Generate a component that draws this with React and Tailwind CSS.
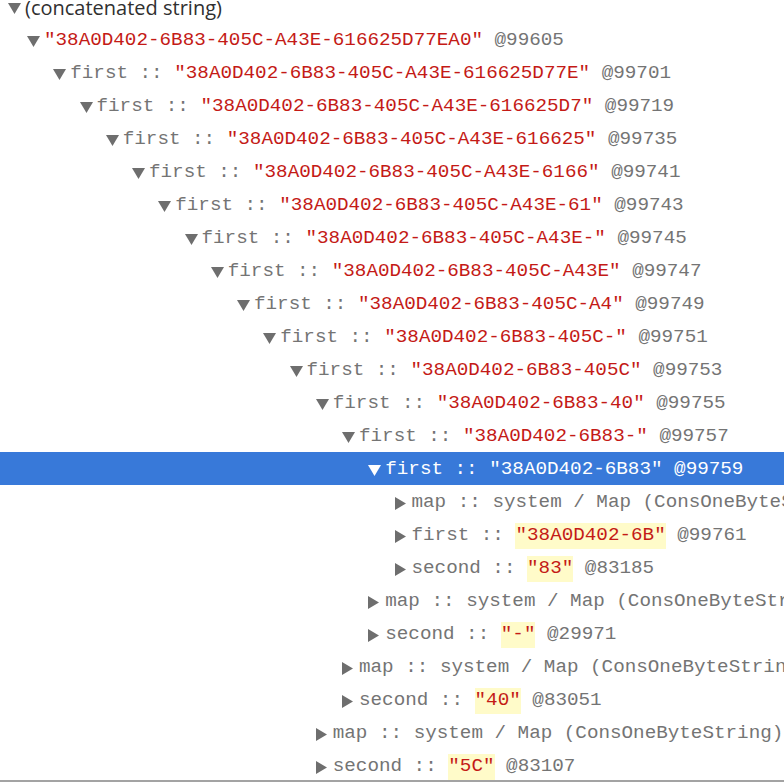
import React from "react";

const rows = [
  { level: 1, open: true, str: "38A0D402-6B83-405C-A43E-616625D77EA0", id: "@99605" },
  { level: 2, open: true, key: "first", str: "38A0D402-6B83-405C-A43E-616625D77E", id: "@99701" },
  { level: 3, open: true, key: "first", str: "38A0D402-6B83-405C-A43E-616625D7", id: "@99719" },
  { level: 4, open: true, key: "first", str: "38A0D402-6B83-405C-A43E-616625", id: "@99735" },
  { level: 5, open: true, key: "first", str: "38A0D402-6B83-405C-A43E-6166", id: "@99741" },
  { level: 6, open: true, key: "first", str: "38A0D402-6B83-405C-A43E-61", id: "@99743" },
  { level: 7, open: true, key: "first", str: "38A0D402-6B83-405C-A43E-", id: "@99745" },
  { level: 8, open: true, key: "first", str: "38A0D402-6B83-405C-A43E", id: "@99747" },
  { level: 9, open: true, key: "first", str: "38A0D402-6B83-405C-A4", id: "@99749" },
  { level: 10, open: true, key: "first", str: "38A0D402-6B83-405C-", id: "@99751" },
  { level: 11, open: true, key: "first", str: "38A0D402-6B83-405C", id: "@99753" },
  { level: 12, open: true, key: "first", str: "38A0D402-6B83-40", id: "@99755" },
  { level: 13, open: true, key: "first", str: "38A0D402-6B83-", id: "@99757" },
  { level: 14, open: true, key: "first", str: "38A0D402-6B83", id: "@99759", selected: true },
  { level: 15, key: "map", plain: "system / Map (ConsOneByteString) @83161" },
  { level: 15, key: "first", str: "38A0D402-6B", id: "@99761", hl: true },
  { level: 15, key: "second", str: "83", id: "@83185", hl: true },
  { level: 14, key: "map", plain: "system / Map (ConsOneByteString) @83161" },
  { level: 14, key: "second", str: "-", id: "@29971", hl: true },
  { level: 13, key: "map", plain: "system / Map (ConsOneByteString) @83161" },
  { level: 13, key: "second", str: "40", id: "@83051", hl: true },
  { level: 12, key: "map", plain: "system / Map (ConsOneByteString) @83161" },
  { level: 12, key: "second", str: "5C", id: "@83107", hl: true },
];

function Down({ color }) {
  return (
    <svg width="13" height="11" viewBox="0 0 13 11" className="shrink-0">
      <polygon points="0,0 13,0 6.5,11" fill={color} />
    </svg>
  );
}

function Right({ color }) {
  return (
    <svg width="11" height="13" viewBox="0 0 11 13" className="shrink-0">
      <polygon points="0,0 11,6.5 0,13" fill={color} />
    </svg>
  );
}

function Row({ r }) {
  const sel = !!r.selected;
  const tri = sel ? "#ffffff" : "#6e6e6e";
  const keyCls = sel ? "text-white" : "text-[#747474]";
  const strCls = sel ? "text-white" : "text-[#c41a16]";
  return (
    <div
      className={`box-border flex h-[33px] items-center whitespace-nowrap pt-[3px] ${sel ? "bg-[#3879d9]" : ""}`}
      style={{ paddingLeft: 27 + (r.level - 1) * 26.25 }}
    >
      <div className="flex w-[17px] shrink-0 items-center">
        {r.open ? <Down color={tri} /> : <Right color={tri} />}
      </div>
      <span className="font-['Liberation_Mono',monospace] text-[19.25px] leading-none">
        {r.key && <span className={keyCls}>{r.key} :: </span>}
        {r.plain && <span className={keyCls}>{r.plain}</span>}
        {r.str !== undefined && (
          <span
            className={`${strCls} ${r.hl ? "bg-[#fffbc9] inline-block py-[3px]" : ""}`}
          >
            "{r.str}"
          </span>
        )}
        {r.id && <span className={keyCls}> {r.id}</span>}
      </span>
    </div>
  );
}

export default function App() {
  return (
    <div className="h-[782px] w-[784px] overflow-hidden border-b-2 border-[#a3a3a3] bg-white">
      <div className="-mt-[10px]">
        <div className="box-border flex h-[33px] items-center whitespace-nowrap pl-[8px] pt-[3px]">
          <div className="flex w-[17px] shrink-0 items-center">
            <Down color="#6e6e6e" />
          </div>
          <span className="font-['Open_Sans',sans-serif] text-[20px] leading-none text-[#303030]">
            (concatenated string)
          </span>
        </div>
        {rows.map((r, i) => (
          <Row key={i} r={r} />
        ))}
      </div>
    </div>
  );
}
